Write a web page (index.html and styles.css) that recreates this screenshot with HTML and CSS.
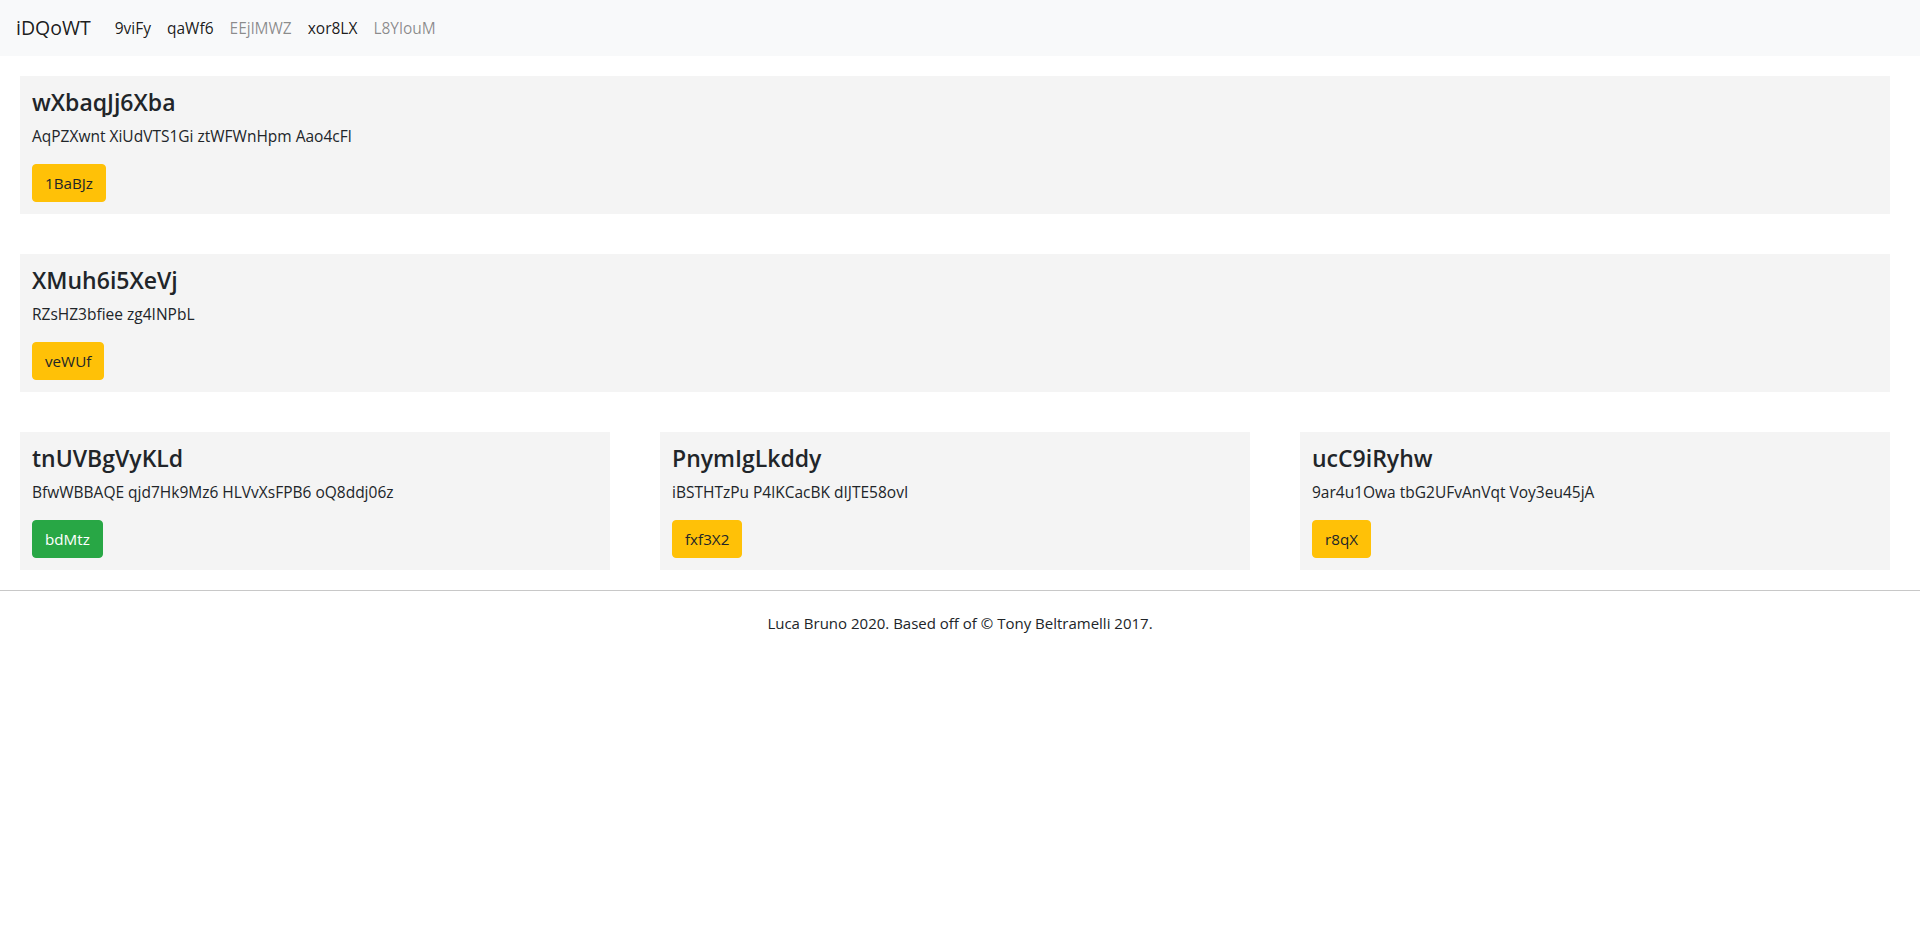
FILE: index.html
```html
<!DOCTYPE html>
<html lang="en">
<head>
<meta charset="utf-8">
<title>iDQoWT</title>
<link rel="stylesheet" href="styles.css">
</head>
<body>
<nav class="navbar">
  <span class="brand">iDQoWT</span>
  <ul class="nav">
    <li><a class="nav-link active">9viFy</a></li>
    <li><a class="nav-link active">qaWf6</a></li>
    <li><a class="nav-link">EEjlMWZ</a></li>
    <li><a class="nav-link active">xor8LX</a></li>
    <li><a class="nav-link">L8YlouM</a></li>
  </ul>
</nav>
<main class="content">
  <div class="row">
    <div class="col">
      <div class="card">
        <h4 class="card-title">wXbaqJj6Xba</h4>
        <p class="card-text">AqPZXwnt XiUdVTS1Gi ztWFWnHpm Aao4cFl</p>
        <a class="btn btn-warning">1BaBJz</a>
      </div>
    </div>
  </div>
  <div class="row">
    <div class="col">
      <div class="card">
        <h4 class="card-title">XMuh6i5XeVj</h4>
        <p class="card-text">RZsHZ3bfiee zg4INPbL</p>
        <a class="btn btn-warning">veWUf</a>
      </div>
    </div>
  </div>
  <div class="row">
    <div class="col">
      <div class="card">
        <h4 class="card-title">tnUVBgVyKLd</h4>
        <p class="card-text">BfwWBBAQE qjd7Hk9Mz6 HLVvXsFPB6 oQ8ddj06z</p>
        <a class="btn btn-success">bdMtz</a>
      </div>
    </div>
    <div class="col">
      <div class="card">
        <h4 class="card-title">PnymIgLkddy</h4>
        <p class="card-text">iBSTHTzPu P4lKCacBK dIJTE58ovI</p>
        <a class="btn btn-warning">fxf3X2</a>
      </div>
    </div>
    <div class="col">
      <div class="card">
        <h4 class="card-title">ucC9iRyhw</h4>
        <p class="card-text">9ar4u1Owa tbG2UFvAnVqt Voy3eu45jA</p>
        <a class="btn btn-warning">r8qX</a>
      </div>
    </div>
  </div>
</main>
<footer class="footer">
  <p>Luca Bruno 2020. Based off of &copy; Tony Beltramelli 2017.</p>
</footer>
</body>
</html>
```

FILE: styles.css
```css
* { box-sizing: border-box; }
html, body { margin: 0; padding: 0; }
body {
  font-family: "Open Sans", "Noto Sans", sans-serif;
  font-size: 15px;
  line-height: 24px;
  color: #212529;
  background: #fff;
}
.navbar {
  display: flex;
  align-items: center;
  height: 56px;
  padding: 8px 16px;
  background: #f8f9fa;
}
.brand {
  font-size: 19.5px;
  line-height: 30px;
  padding: 5px 0;
  margin-right: 16px;
  color: rgba(0,0,0,.9);
}
.nav {
  display: flex;
  list-style: none;
  margin: 0;
  padding: 0;
}
.nav-link {
  display: block;
  padding: 8px;
  font-size: 15.5px;
  color: rgba(0,0,0,.45);
}
.nav-link.active { color: rgba(0,0,0,.9); }
.content { display: flex; flex-direction: column; }
.row { display: flex; }
.col { flex: 1 1 0; min-width: 0; }
.card {
  margin: 20px 30px 20px 20px;
  padding: 12px;
  background: #f4f4f4;
}
.card-title {
  margin: 0 0 8px;
  font-size: 23px;
  font-weight: 600;
  line-height: 28px;
}
.card-text {
  margin: 0 0 16px;
  font-size: 15.5px;
}
.btn {
  display: inline-block;
  padding: 6px 12px;
  font-size: 15.2px;
  line-height: 24px;
  border: 1px solid transparent;
  border-radius: 4px;
}
.btn-warning { background: #ffc107; border-color: #ffc107; color: #212529; }
.btn-success { background: #28a745; border-color: #28a745; color: #fff; }
.footer {
  border-top: 1px solid #c8c8c8;
  padding-top: 20px;
  text-align: center;
}
.footer p { margin: 0 0 16px; }
```
